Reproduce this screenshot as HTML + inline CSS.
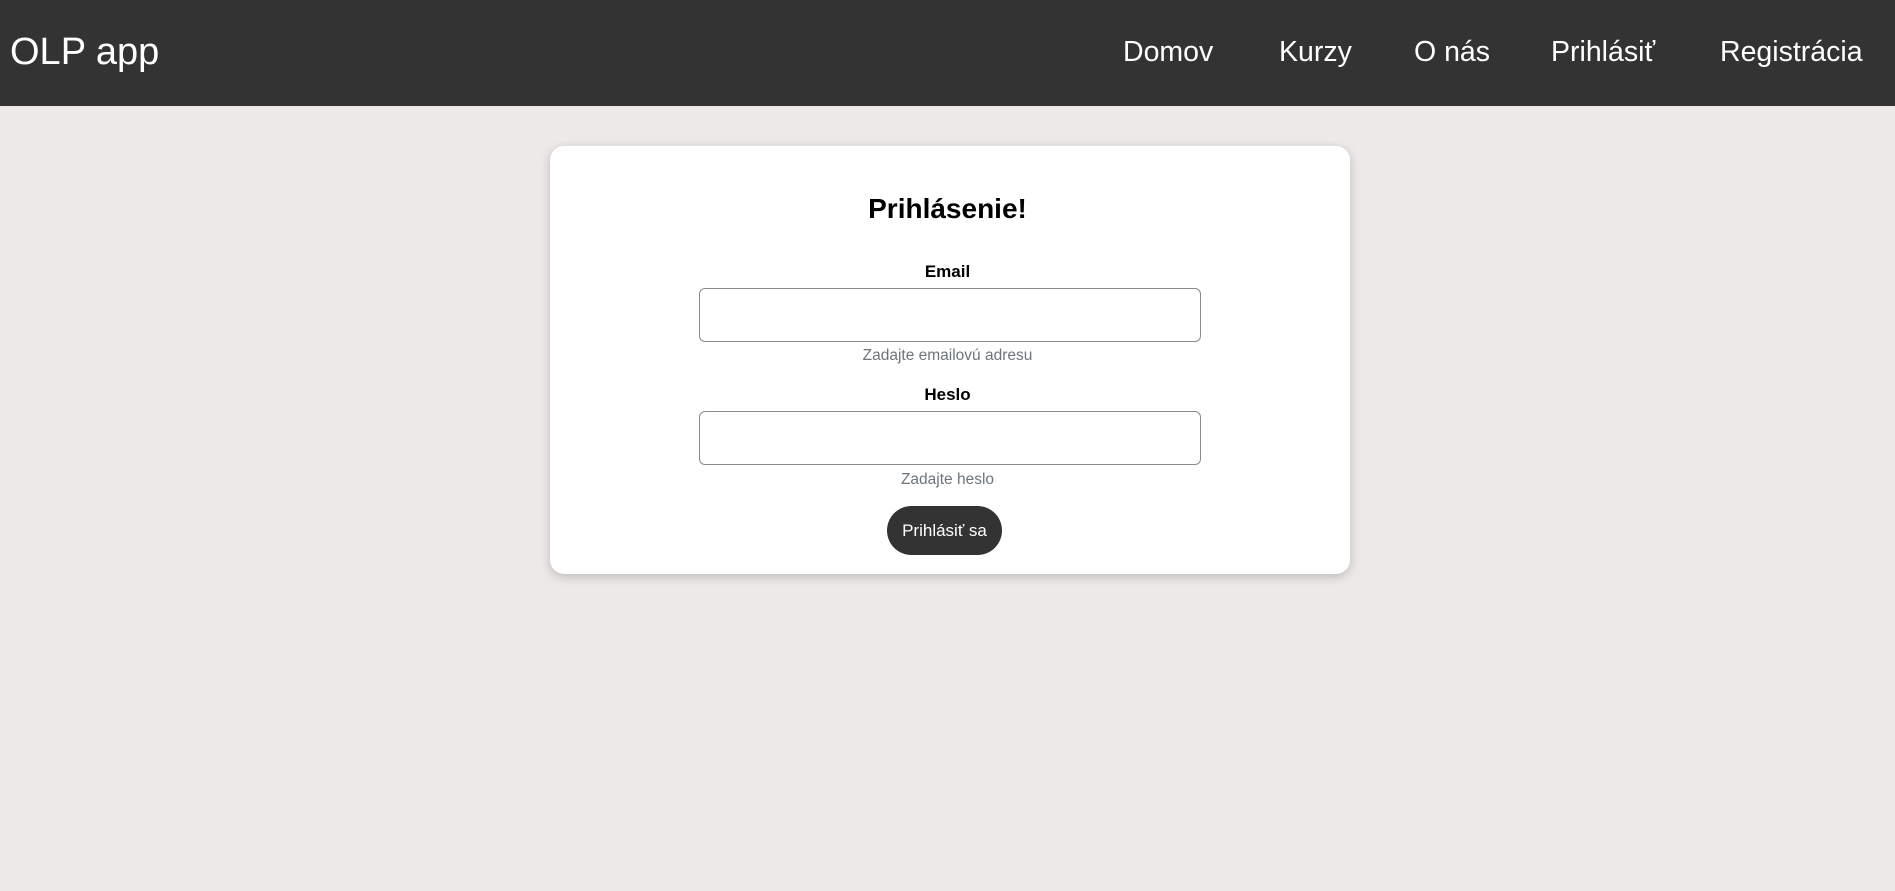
<!DOCTYPE html>
<html><head><meta charset="utf-8"><style>
*{margin:0;padding:0;box-sizing:border-box}
body{width:1895px;height:891px;background:#ede9e8;font-family:"Liberation Sans",sans-serif;position:relative;overflow:hidden}
.hdr{position:absolute;left:0;top:0;width:1895px;height:106px;background:#333}
.logo{position:absolute;left:10px;top:28px;font-size:38px;color:#fff;line-height:48px}
.nav{position:absolute;top:35px;font-size:28.5px;color:#fff;line-height:34px}
.card{position:absolute;left:550px;top:146px;width:800px;height:428px;background:#fff;border-radius:14px;box-shadow:0 3px 10px rgba(0,0,0,.2)}
.c{position:absolute;left:0;width:1895px;text-align:center}
.t{top:192px;font-size:28px;font-weight:bold;line-height:34px}
.l{font-size:17px;font-weight:bold;line-height:20px}
.h{font-size:15.5px;color:#6c757d;line-height:18px}
.in{position:absolute;left:699px;width:502px;height:54px;border:1px solid #8a8a8a;border-radius:6px;background:#fff}
.btn{position:absolute;left:887px;top:506px;width:115px;height:49px;border-radius:25px;background:#333;color:#fff;font-size:17px;line-height:49px;text-align:center}
</style></head><body>
<div class="hdr">
<div class="logo">OLP app</div>
<div class="nav" style="left:1123px">Domov</div>
<div class="nav" style="left:1279px">Kurzy</div>
<div class="nav" style="left:1414px">O nás</div>
<div class="nav" style="left:1551px">Prihlásiť</div>
<div class="nav" style="left:1720px">Registrácia</div>
</div>
<div class="card"></div>
<div class="c t">Prihlásenie!</div>
<div class="c l" style="top:262px">Email</div>
<div class="in" style="top:288px"></div>
<div class="c h" style="top:347px">Zadajte emailovú adresu</div>
<div class="c l" style="top:385px">Heslo</div>
<div class="in" style="top:411px"></div>
<div class="c h" style="top:471px">Zadajte heslo</div>
<div class="btn">Prihlásiť sa</div>
</body></html>
